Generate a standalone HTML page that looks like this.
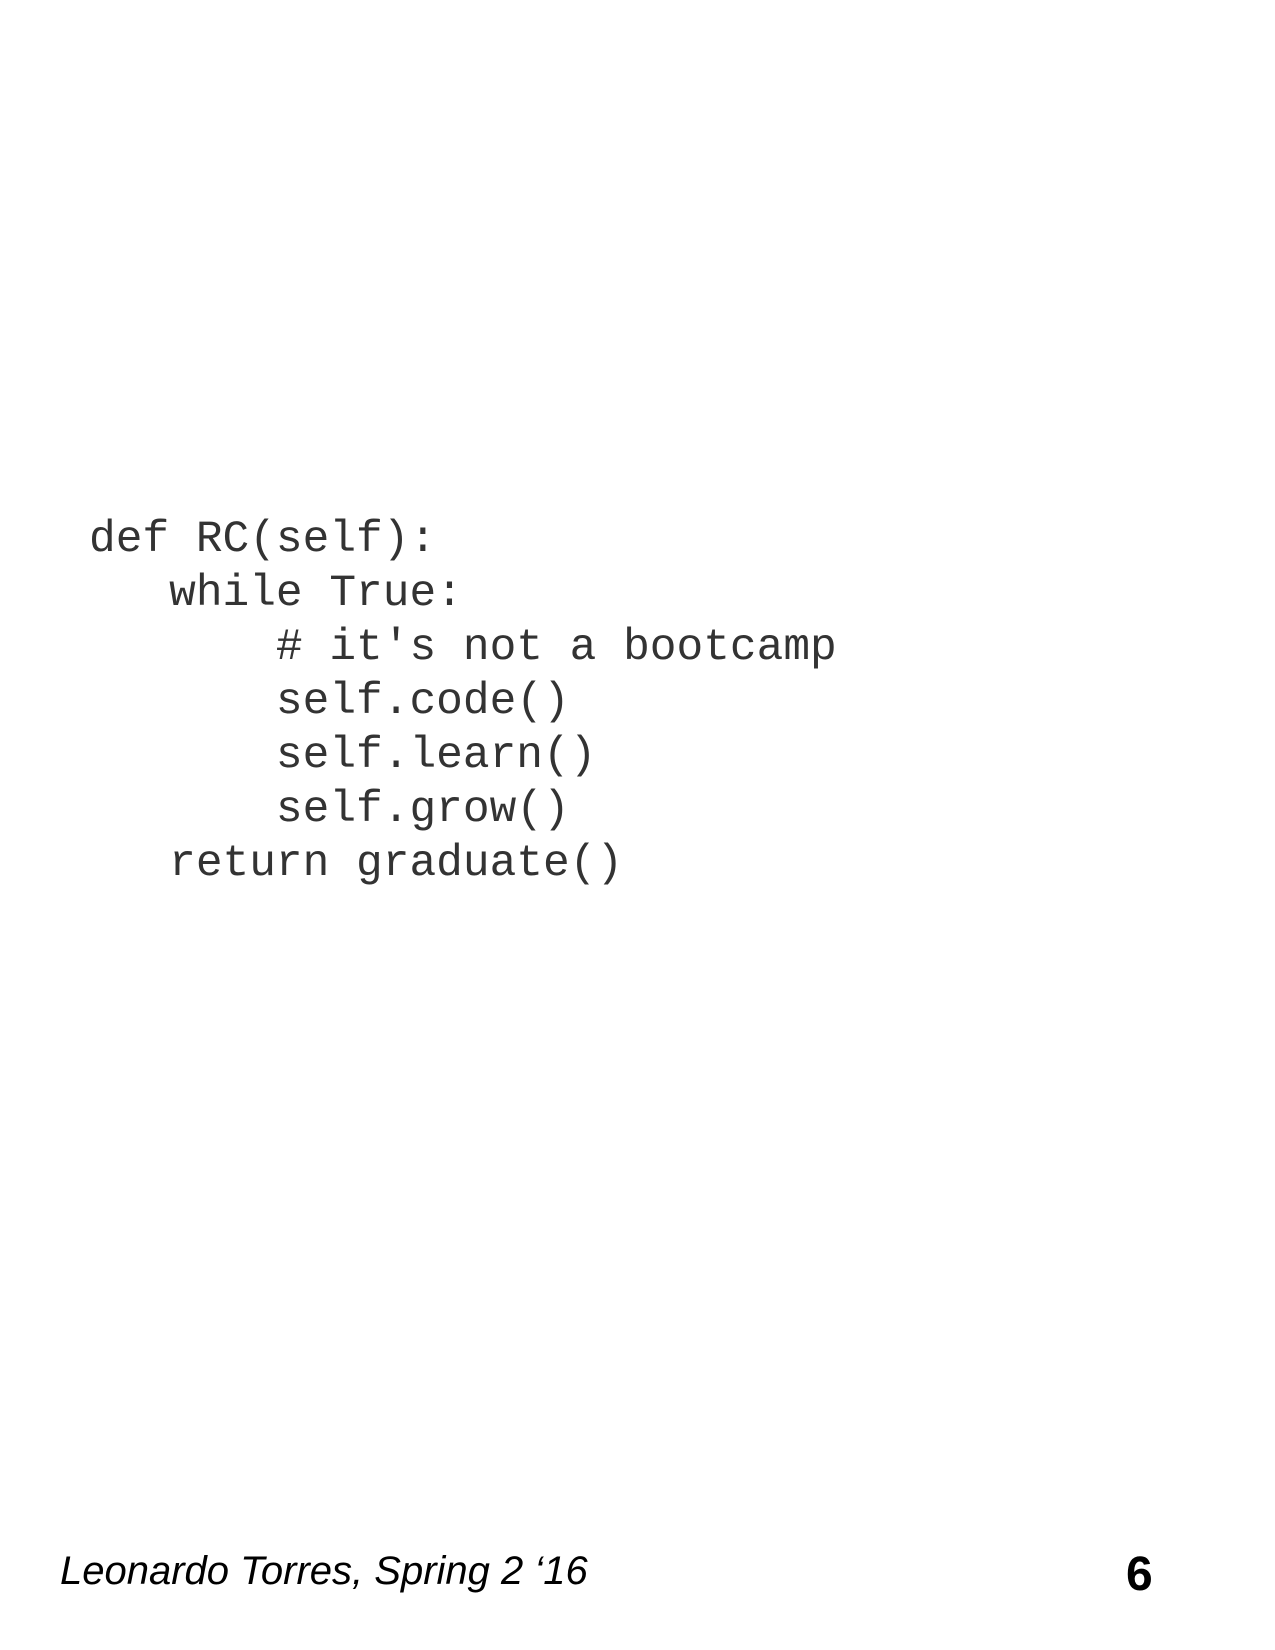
<!DOCTYPE html>
<html><head><style>
html,body{margin:0;padding:0;background:#fff;width:1275px;height:1650px;overflow:hidden;position:relative}
pre{position:absolute;left:89px;top:513px;margin:0;font-family:"Liberation Mono",monospace;font-size:44.5px;line-height:54px;color:#333}
.f{position:absolute;left:60px;top:1547px;font-family:"Liberation Sans",sans-serif;font-style:italic;font-size:40px;line-height:48px;color:#000;letter-spacing:0}
.n{position:absolute;left:1126px;top:1547px;font-family:"Liberation Sans",sans-serif;font-weight:bold;font-size:48px;line-height:56px;color:#000}
</style></head><body>
<pre>def RC(self):
   while True:
       # it's not a bootcamp
       self.code()
       self.learn()
       self.grow()
   return graduate()</pre>
<div class="f">Leonardo Torres, Spring 2 ‘16</div>
<div class="n">6</div>
</body></html>
